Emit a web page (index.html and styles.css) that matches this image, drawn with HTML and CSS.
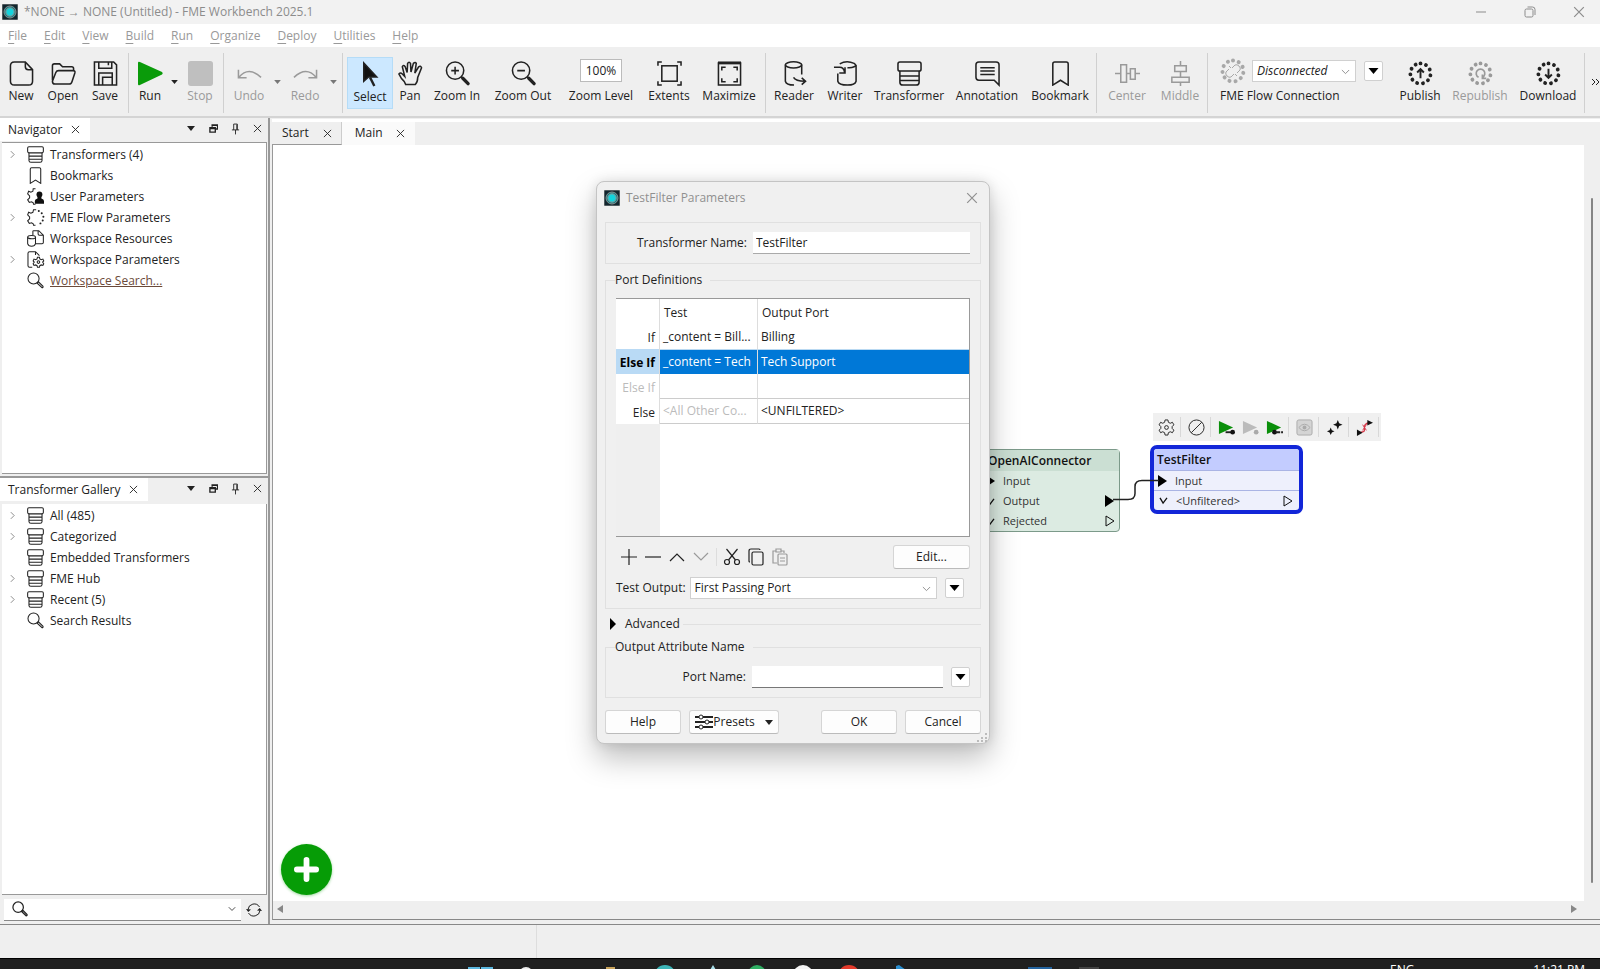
FILE: index.html
```html
<!DOCTYPE html>
<html lang="en">
<head>
<meta charset="utf-8">
<title>*NONE → NONE (Untitled) - FME Workbench 2025.1</title>
<link rel="stylesheet" href="styles.css">
</head>
<body>
<svg class="defs" aria-hidden="true">
  <symbol id="logo" viewBox="0 0 16 16"><rect width="16" height="16" rx="1" fill="#12262e"/><circle cx="8" cy="8" r="6" fill="#0b7f86"/><circle cx="8" cy="8" r="4.2" fill="#14d3dc"/></symbol>
  <symbol id="x" viewBox="0 0 10 10"><path d="M1 1l8 8M9 1l-8 8"/></symbol>
  <symbol id="down" viewBox="0 0 10 6"><path d="M0 0h10L5 6z" fill="currentColor" stroke="none"/></symbol>
  <symbol id="chev" viewBox="0 0 10 6"><path d="M1 .8l4 4 4-4"/></symbol>
  <symbol id="right" viewBox="0 0 6 10"><path d="M1 1l4 4-4 4"/></symbol>
  <symbol id="float" viewBox="0 0 10 10"><path d="M3.5 3V1h6v4.500h-2M1 4h6v5H1zM1 5h6M3.500 1.500h6" stroke-width="1.500"/></symbol>
  <symbol id="pin" viewBox="0 0 10 14"><path d="M3 8V1.500h4V8M1 8h8M5 8v5M6.500 2v6"/></symbol>
  <symbol id="transformer" viewBox="0 0 26 26"><rect x="1" y="1" width="24" height="9.500" rx="2"/><path d="M3 10.500v11.500q0 3 3 3h14q3 0 3-3V10.500M3 15.500h20M3 20.200h20"/></symbol>
  <symbol id="bookmark" viewBox="0 0 26 26"><path d="M5 3q0-2 2-2h12q2 0 2 2v22l-8-5-8 5z"/></symbol>
  <symbol id="search" viewBox="0 0 26 26"><circle cx="10" cy="10" r="8.500"/><path d="M15.500 17l2-2 7 7q.5 2-1.500 2z"/></symbol>
  <symbol id="ring" viewBox="0 0 26 26"><path d="M13 2.500a10.500 10.500 0 1 1-.1 0" stroke-width="4" stroke-linecap="round" stroke-dasharray="0.01 5.9873"/></symbol>
</svg>

<header class="titlebar">
  <svg class="i16"><use href="#logo"/></svg>
  <h1 class="title">*NONE → NONE (Untitled) - FME Workbench 2025.1</h1>
  <div class="winbtns">
    <button aria-label="Minimize"><svg class="i12" viewBox="0 0 12 12"><path d="M1 6h10"/></svg></button>
    <button aria-label="Restore"><svg class="i12" viewBox="0 0 12 12"><rect x="1" y="3" width="8" height="8" rx="1.500"/><path d="M3.500 1h5Q11 1 11 3.500V9"/></svg></button>
    <button aria-label="Close"><svg class="i12"><use href="#x"/></svg></button>
  </div>
</header>
<nav class="menubar">
  <button><u>F</u>ile</button><button><u>E</u>dit</button><button><u>V</u>iew</button><button><u>B</u>uild</button><button><u>R</u>un</button><button><u>O</u>rganize</button><button><u>D</u>eploy</button><button><u>U</u>tilities</button><button><u>H</u>elp</button>
</nav>

<div class="toolbar" role="toolbar">
  <button class="tool w42"><svg viewBox="0 0 26 26"><path d="M1.500 5q0-4 4-4H17l7.500 8v12q0 4-4 4h-15q-4 0-4-4zM17 1v5q0 3 3 3h4.500"/></svg>New</button>
  <button class="tool w42"><svg viewBox="0 0 26 26"><path d="M1.500 20V5q0-2 2-2H9l3 3h9.500q2 0 2 2v2M1.500 21l3.500-9q.8-2 3-2h15q2.500 0 1.800 2.500l-3 9q-.8 2.500-3 2.500H4q-2.500 0-2.500-3z"/></svg>Open</button>
  <button class="tool w42"><svg viewBox="0 0 26 26"><path d="M1.500 1h20l3 3v21h-23zM6 1v6.500h13.500V1M16 1v3.500M6 25V12.500h14V25M10 25v-8h10"/></svg>Save</button>
  <i class="sep"></i>
  <button class="tool w38"><svg viewBox="0 0 26 26"><path d="M0 2q0-2 2-1l23 10.500q1.500 1.500 0 2.500L2 25q-2 1-2-1z" fill="#0a9b0a" stroke="none"/></svg>Run</button>
  <button class="more" aria-label="Run options"><svg><use href="#down"/></svg></button>
  <button class="tool w42 off"><svg viewBox="0 0 26 26"><rect width="26" height="26" rx="3" fill="#bfbfbf" stroke="none"/></svg>Stop</button>
  <i class="sep"></i>
  <button class="tool w46 off"><svg viewBox="0 0 26 26"><path d="M2 17Q12 5 25 17M1.500 9v8.500H10"/></svg>Undo</button>
  <button class="more off" aria-label="Undo list"><svg><use href="#down"/></svg></button>
  <button class="tool w46 off"><svg viewBox="0 0 26 26"><path d="M24 17Q14 5 1 17M24.500 9v8.500H16"/></svg>Redo</button>
  <button class="more off" aria-label="Redo list"><svg><use href="#down"/></svg></button>
  <i class="sep wide"></i>
  <button class="tool w46 on"><svg viewBox="0 0 26 26"><path d="M6 1v19l5-4.500 8.500 0z" fill="#111"/><path d="M12.500 16l4.500 9" stroke-width="2.500"/></svg>Select</button>
  <button class="tool w34"><svg viewBox="0 0 26 26"><path d="M8 24.500Q7 21 3.500 18L1 13.500q1.500-2 3.500 0L7 16 4.500 6q1-2.500 3 0L9.500 12 10 2.500q1.500-2.500 3 0l.5 9L16 2.500q2-2 3 0l-1.500 10L21.500 6q2-1.500 3 1L20.500 17q0 5-2.500 7.500z"/></svg>Pan</button>
  <button class="tool w60"><svg viewBox="0 0 26 26"><circle cx="10.500" cy="10" r="9"/><path d="M10.500 6v8M6.500 10h8M17 16.500l7 7" /><path d="M18.500 18l5.500 5.500" stroke-width="3.500" stroke-linecap="round"/></svg>Zoom In</button>
  <button class="tool w72"><svg viewBox="0 0 26 26"><circle cx="10.500" cy="10" r="9"/><path d="M6.500 10h8M17 16.500l7 7"/><path d="M18.500 18l5.500 5.500" stroke-width="3.500" stroke-linecap="round"/></svg>Zoom Out</button>
  <div class="tool w84 field"><input id="zoom" class="zoom" value="100%"><label for="zoom">Zoom Level</label></div>
  <button class="tool w52"><svg viewBox="0 0 26 26"><rect x="5" y="5" width="16" height="16"/><path d="M1 5V1h4M21 1h4v4M25 21v4h-4M5 25H1v-4"/></svg>Extents</button>
  <button class="tool w68"><svg viewBox="0 0 26 26"><path d="M1.500 2h23v23h-23z"/><path d="M1 2h24" stroke-width="3"/><path d="M5 10V6.500h4M17 6.500h4V10M21 18v3.500h-4M9 21.500H5V18"/></svg>Maximize</button>
  <i class="sep"></i>
  <button class="tool w52"><svg viewBox="0 0 26 26"><ellipse cx="12" cy="4" rx="8.500" ry="3.200"/><path d="M3.500 4v17q1 4 9 4M20.500 4v10M12 17q2 4 12 4M20.500 17.500l4 3.500-4 3.500"/></svg>Reader</button>
  <button class="tool w50"><svg viewBox="0 0 26 26"><path d="M7 3Q14-1 22 2.500q3 2 0 3.500-3 1.500-7 1M5 13v8q1 4 10 4 8 0 9-4V4M1 6.500h6q4 0 5 5M12.500 6.500v6h-6"/></svg>Writer</button>
  <button class="tool w78"><svg><use href="#transformer"/></svg>Transformer</button>
  <button class="tool w78"><svg viewBox="0 0 26 26"><path d="M4 1h18q3 0 3 3v21l-5-5H4q-3 0-3-3V4q0-3 3-3zM5.500 7h15M5.500 10.500h15M5.500 14h15"/></svg>Annotation</button>
  <button class="tool w68"><svg><use href="#bookmark"/></svg>Bookmark</button>
  <i class="sep"></i>
  <button class="tool w56 off"><svg viewBox="0 0 26 26"><path d="M0 13h6M12 13h4M21 13h5M6 4h6v18H6zM16 8h5v11h-5z"/></svg>Center</button>
  <button class="tool w50 off"><svg viewBox="0 0 26 26"><path d="M13 0v5M13 11v6M13 22v4M7 5h12v6H7zM4 17h18v5H4z"/></svg>Middle</button>
  <i class="sep"></i>
  <div class="flow">
    <div class="flowrow">
      <svg class="i26 grey" viewBox="0 0 26 26"><use href="#ring"/><path d="M12 10l3-3q2-1 4 1t1 4l-3 3M14 16l-3 3q-2 1-4-1t-1-4l3-3M9 8l2 2M17 18l-2-2"/></svg>
      <span class="combo italic"><select id="flow"><option>Disconnected</option></select><svg><use href="#chev"/></svg></span>
      <button class="drop" aria-label="Connection options"><svg><use href="#down"/></svg></button>
    </div>
    <label for="flow">FME Flow Connection</label>
  </div>
  <button class="tool w52"><svg viewBox="0 0 26 26"><use href="#ring"/><path d="M13 18V8.500M9.500 12L13 8.500l3.500 3.500" stroke-width="2"/></svg>Publish</button>
  <button class="tool w68 off"><svg viewBox="0 0 26 26"><use href="#ring"/><path d="M11 17a4.500 4.500 0 1 1 4 0M19 18h-4v-4" stroke-width="1.800"/></svg>Republish</button>
  <button class="tool w68"><svg viewBox="0 0 26 26"><use href="#ring"/><path d="M13 8v9.500M9.500 14l3.500 3.500 3.500-3.500" stroke-width="2"/></svg>Download</button>
  <i class="sep"></i>
  <button class="ext" aria-label="More tools"><svg viewBox="0 0 10 10"><path d="M2 2l3 3-3 3M6 2l3 3-3 3"/></svg></button>
</div>

<div class="work">
  <aside class="docks">
    <section class="dock nav">
      <div class="dockhead"><h2 class="docktab">Navigator <button aria-label="Close tab"><svg class="i9"><use href="#x"/></svg></button></h2>
        <div class="dockbtns"><button aria-label="Menu"><svg class="dn"><use href="#down"/></svg></button><button aria-label="Float"><svg class="i9"><use href="#float"/></svg></button><button aria-label="Pin"><svg class="pin"><use href="#pin"/></svg></button><button aria-label="Close"><svg class="i9"><use href="#x"/></svg></button></div></div>
      <ul class="tree">
        <li><svg class="ar"><use href="#right"/></svg><svg class="ic"><use href="#transformer"/></svg>Transformers (4)</li>
        <li><svg class="ic"><use href="#bookmark"/></svg>Bookmarks</li>
        <li><svg class="ic" viewBox="0 0 26 26"><path d="M13 1H9.500L9 5 6 6.500 2.500 5 1 9l3 3v3l-3 3 2.500 4L7 21l2.500 1.500L10 25h3"/><path d="M12 24v-4q0-3 4-4v-3h6v3q4 1 4 4v4z" fill="#111" stroke="none"/><circle cx="19" cy="10" r="4.500" fill="#111" stroke="none"/></svg>User Parameters</li>
        <li><svg class="ar"><use href="#right"/></svg><svg class="ic" viewBox="0 0 26 26"><path d="M14 1H10L9 5 6 6.500 2.500 5 1 9l3 3v3l-3 3 2.500 4L7 21l2.500 1.500L10 25h3"/><path d="M18 3h.1M22.500 6.500h.1M25 12h.1M24 17.500h.1M20.500 22h.1" stroke-width="3" stroke-linecap="round"/></svg>FME Flow Parameters</li>
        <li><svg class="ic" viewBox="0 0 26 26"><ellipse cx="7" cy="11" rx="6" ry="2.500"/><path d="M1 11v10q1 4 6 4t6-4V11M9 8V2q0-1 1-1h8l7 7v11q0 2-2 2H13M17 1v5q0 2 2 2h6"/></svg>Workspace Resources</li>
        <li><svg class="ar"><use href="#right"/></svg><svg class="ic" viewBox="0 0 26 26"><path d="M8 25H4q-2.500 0-2.500-2.500v-19Q1.500 1 4 1h9l6 6M13 1v5"/><circle cx="17.500" cy="17" r="2"/><path d="M16 9.500h3l.6 2.500 2.200 1.200 2.500-.8 1.300 2.600-1.700 2 1.700 2.500-1.300 2.600-2.500-.8-2.200 1.200L19 25h-3l-.6-2.500-2.200-1.200-2.500.8-1.300-2.600 1.700-2.500-1.700-2 1.300-2.600 2.500.8 2.200-1.200z"/></svg>Workspace Parameters</li>
        <li><svg class="ic"><use href="#search"/></svg><a href="#search-box">Workspace Search...</a></li>
      </ul>
    </section>
    <section class="dock gallery">
      <div class="dockhead"><h2 class="docktab">Transformer Gallery <button aria-label="Close tab"><svg class="i9"><use href="#x"/></svg></button></h2>
        <div class="dockbtns"><button aria-label="Menu"><svg class="dn"><use href="#down"/></svg></button><button aria-label="Float"><svg class="i9"><use href="#float"/></svg></button><button aria-label="Pin"><svg class="pin"><use href="#pin"/></svg></button><button aria-label="Close"><svg class="i9"><use href="#x"/></svg></button></div></div>
      <ul class="tree">
        <li><svg class="ar"><use href="#right"/></svg><svg class="ic"><use href="#transformer"/></svg>All (485)</li>
        <li><svg class="ar"><use href="#right"/></svg><svg class="ic"><use href="#transformer"/></svg>Categorized</li>
        <li><svg class="ic"><use href="#transformer"/></svg>Embedded Transformers</li>
        <li><svg class="ar"><use href="#right"/></svg><svg class="ic"><use href="#transformer"/></svg>FME Hub</li>
        <li><svg class="ar"><use href="#right"/></svg><svg class="ic"><use href="#transformer"/></svg>Recent (5)</li>
        <li><svg class="ic"><use href="#search"/></svg>Search Results</li>
      </ul>
      <div class="searchrow">
        <div class="searchbox"><svg class="i16 bold"><use href="#search"/></svg><input id="search-box" aria-label="Search transformers"><svg class="cv"><use href="#chev"/></svg></div>
        <button aria-label="Refresh"><svg class="i16" viewBox="0 0 16 16"><path d="M2 7.500A6.200 6.200 0 0 1 13.500 5M14 8.500A6.200 6.200 0 0 1 2.500 11"/><path d="M0 7l2.200 3L5 7.500zM16 9l-2.200-3L11 8.500z" fill="#222" stroke="none"/></svg></button>
      </div>
    </section>
  </aside>

  <main class="main">
    <div class="tabs"><div class="tab">Start <button aria-label="Close Start"><svg class="i9"><use href="#x"/></svg></button></div><div class="tab active">Main <button aria-label="Close Main"><svg class="i9"><use href="#x"/></svg></button></div></div>
    <div class="view">
      <div class="canvas">
        <div class="node green">
          <h3>OpenAIConnector</h3>
          <p><svg class="tri"><path d="M0 0l9 6-9 6z"/></svg>Input</p>
          <p><svg class="vee" viewBox="0 0 10 8"><path d="M1 1l3.500 6L9 1"/></svg>Output<svg class="tri out"><path d="M0 0l9 6-9 6z"/></svg></p>
          <p><svg class="vee" viewBox="0 0 10 8"><path d="M1 1l3.500 6L9 1"/></svg>Rejected<svg class="tri out open"><path d="M1 1l8 5-8 5z"/></svg></p>
        </div>
        <div class="node blue">
          <h3>TestFilter</h3>
          <p><svg class="tri"><path d="M0 0l9 6-9 6z"/></svg>Input</p>
          <p><svg class="vee" viewBox="0 0 10 8"><path d="M1 1l3.500 6L9 1"/></svg>&lt;Unfiltered&gt;<svg class="tri out open"><path d="M1 1l8 5-8 5z"/></svg></p>
        </div>
        <svg class="wire" viewBox="0 0 46 22"><path d="M0 20.500h15q7 0 7-6v-7q0-6 7-6h17"/></svg>
        <div class="minibar">
          <button aria-label="Parameters"><svg viewBox="0 0 18 18"><circle cx="9" cy="9" r="2"/><path d="M7.500 1h3l.5 2.500 2 1 2.300-1 1.500 2.700L15 8v2l1.800 1.800-1.500 2.700-2.300-1-2 1-.5 2.500h-3L7 14.500l-2-1-2.300 1-1.500-2.700L3 10V8L1.200 6.200l1.500-2.700 2.300 1 2-1z"/></svg></button><i></i>
          <button aria-label="Disable"><svg viewBox="0 0 18 18"><circle cx="9" cy="9" r="8"/><path d="M14.500 3.500l-11 11"/></svg></button><i></i>
          <button aria-label="Run to this"><svg viewBox="0 0 18 18"><path d="M1 2l15 7-15 7z" fill="#0a8f0a" stroke="none"/><path d="M8 14h6" stroke-width="2"/><circle cx="15.500" cy="14" r="2.500" fill="#111" stroke="none"/></svg></button>
          <button aria-label="Run selected"><svg viewBox="0 0 18 18"><path d="M1 2l15 7-15 7z" fill="#bbb" stroke="none"/><circle cx="15" cy="14" r="2.500" fill="#aaa" stroke="none"/></svg></button>
          <button aria-label="Run from this"><svg viewBox="0 0 18 18"><path d="M1 2l15 7-15 7z" fill="#0a8f0a" stroke="none"/><circle cx="9" cy="14" r="2.500" fill="#111" stroke="none"/><path d="M10 14h8" stroke-width="2" stroke-dasharray="5 1"/></svg></button><i></i>
          <button aria-label="Inspect"><svg viewBox="0 0 18 18"><rect x="1" y="1" width="16" height="16" rx="2" fill="#d4d4d4" stroke="#aaa"/><path d="M3 9q6-7 12 0-6 7-12 0z" stroke="#aaa"/><circle cx="9" cy="9" r="2" fill="#aaa" stroke="none"/></svg></button><i></i>
          <button aria-label="Assist"><svg viewBox="0 0 18 18"><path d="M12.500 1l1.400 3.600L17.500 6l-3.600 1.400-1.400 3.600-1.400-3.600L7.500 6l3.600-1.400zM5 9l1.200 2.800L9 13l-2.800 1.200L5 17l-1.200-2.800L1 13l2.800-1.200z" fill="#111" stroke="none"/></svg></button><i></i>
          <button aria-label="Connections"><svg viewBox="0 0 18 18"><path d="M5 14q5 0 4-4-1-5 5-6" stroke="#d63a4a" stroke-width="1.500"/><path d="M7 6l4 6M11 6l-4 6" stroke="#d63a4a"/><path d="M12 1l6 3-6 3zM1 11l6 3.500L1 18z" fill="#111" stroke="none"/></svg></button><i></i>
        </div>
        <button class="add" aria-label="Add"><svg viewBox="0 0 26 26"><path d="M13 3v20M3 13h20" stroke="#fff" stroke-width="6" stroke-linecap="round"/></svg></button>
      </div>
      <div class="vscroll"></div>
      <div class="hscroll"><svg viewBox="0 0 6 8"><path d="M6 0v8L0 4z"/></svg><svg viewBox="0 0 6 8"><path d="M0 0v8l6-4z"/></svg></div>
    </div>
  </main>
</div>

<footer class="status"></footer>
<div class="taskbar">
  <svg class="apps" viewBox="0 0 700 11"><path d="M0 8h12v3H0zM13 8h12v3H13z" fill="#5cb8e0"/><circle cx="58" cy="15" r="7" fill="#eee"/><path d="M138 8h9v3h-9z" fill="#c9a35a"/><circle cx="197" cy="17" r="11" fill="#3db5b8"/><path d="M242 11l3-5 3 5z" fill="#a8dde8"/><circle cx="289" cy="15" r="9" fill="#2fae63"/><circle cx="335" cy="16" r="10" fill="#f4f4f4"/><circle cx="381" cy="17" r="11" fill="#e33b2c"/><path d="M428 11v-4l3-1 7 5z" fill="#2b8fd0"/><path d="M560 8h24v3h-24z" fill="#2464a0"/><path d="M611 8h20v3h-20z" fill="#444"/></svg>
  <span class="lang">ENG</span><span class="clock">11:21 PM</span>
</div>

<form class="dialog" role="dialog" aria-label="TestFilter Parameters">
  <div class="dhead"><svg class="i16"><use href="#logo"/></svg><h2>TestFilter Parameters</h2><button type="button" aria-label="Close dialog"><svg class="i12"><use href="#x"/></svg></button></div>
  <div class="box name"><label for="tname">Transformer Name:</label><input id="tname" value="TestFilter"></div>
  <fieldset class="box ports"><legend>Port Definitions</legend>
    <div class="tablewrap"><table>
      <colgroup><col class="c1"><col class="c2"><col></colgroup>
      <thead><tr><th></th><th>Test</th><th>Output Port</th></tr></thead>
      <tbody>
        <tr><th>If</th><td>_content = Bill...</td><td>Billing</td></tr>
        <tr class="sel"><th>Else If</th><td>_content = Tech</td><td>Tech Support</td></tr>
        <tr class="blank"><th>Else If</th><td></td><td></td></tr>
        <tr class="else"><th>Else</th><td class="dim">&lt;All Other Co...</td><td>&lt;UNFILTERED&gt;</td></tr>
      </tbody></table></div>
    <div class="edits">
      <button type="button" aria-label="Add row"><svg viewBox="0 0 16 16"><path d="M8 0v16M0 8h16"/></svg></button>
      <button type="button" aria-label="Remove row"><svg viewBox="0 0 16 16"><path d="M0 8h16"/></svg></button>
      <button type="button" aria-label="Move up"><svg viewBox="0 0 16 16"><path d="M1 12l7-7 7 7"/></svg></button>
      <button type="button" class="off" aria-label="Move down"><svg viewBox="0 0 16 16"><path d="M1 4l7 7 7-7"/></svg></button>
      <i></i>
      <button type="button" aria-label="Cut"><svg viewBox="0 0 16 16"><circle cx="3" cy="13" r="2.500"/><circle cx="13" cy="13" r="2.500"/><path d="M2.500 0l9 11M13.500 0l-9 11"/></svg></button>
      <button type="button" aria-label="Copy"><svg viewBox="0 0 16 16"><rect x="4" y="3" width="11" height="13" rx="1.500"/><path d="M2 13Q1 13 1 12V2Q1 0 3 0h8q1 0 1 1"/></svg></button>
      <button type="button" class="off" aria-label="Paste"><svg viewBox="0 0 16 16"><rect x="6" y="5" width="9" height="11" rx="1"/><path d="M5 14H1V2h3M9 2h3v2M4 0h5v3H4zM8 9h5M8 12h5"/></svg></button>
      <button type="button" class="btn edit">Edit...</button>
    </div>
    <div class="output"><label for="tout">Test Output:</label><span class="combo"><select id="tout"><option>First Passing Port</option></select><svg><use href="#chev"/></svg></span><button type="button" class="drop" aria-label="Test output options"><svg><use href="#down"/></svg></button></div>
  </fieldset>
  <div class="advanced"><svg viewBox="0 0 6 12"><path d="M0 0l6 6-6 6z" fill="#000"/></svg><span>Advanced</span></div>
  <fieldset class="box attr"><legend>Output Attribute Name</legend><label for="pname">Port Name:</label><input id="pname"><button type="button" class="drop" aria-label="Port name options"><svg><use href="#down"/></svg></button></fieldset>
  <div class="actions">
    <button type="button" class="btn w76">Help</button>
    <button type="button" class="btn w90"><svg class="presets" viewBox="0 0 18 16"><path d="M0 3h4M8 3h10M0 8h10M14 8h4M0 13h4M8 13h10" stroke-width="2"/><circle cx="6" cy="3" r="2"/><circle cx="12" cy="8" r="2"/><circle cx="6" cy="13" r="2"/></svg>Presets<svg class="dn"><use href="#down"/></svg></button>
    <span class="grow"></span>
    <button type="button" class="btn w76">OK</button>
    <button type="button" class="btn w76">Cancel</button>
  </div>
  <svg class="grip" viewBox="0 0 10 10"><path d="M8 1h2v2H8zM4 5h2v2H4zM8 5h2v2H8zM0 8h2v2H0zM4 8h2v2H4zM8 8h2v2H8z"/></svg>
</form>
</body>
</html>
```
FILE: styles.css
```css
* { box-sizing: border-box; }
body { margin: 0; height: 100vh; display: flex; flex-direction: column; overflow: hidden; position: relative; background: #efefef; color: #222; font: 12px/16px "Open Sans", "Noto Sans", sans-serif; }
h1, h2, h3, p, ul, fieldset { margin: 0; padding: 0; font: inherit; border: 0; list-style: none; }
button, input, select { font: inherit; color: inherit; background: none; border: 0; padding: 0; margin: 0; min-width: 0; }
svg { display: block; fill: none; stroke: currentColor; flex: none; overflow: visible; }
.defs { position: absolute; width: 0; height: 0; }
.i9 { width: 9px; height: 9px; }
.i12 { width: 12px; height: 12px; }
.i16 { width: 16px; height: 16px; }
.i26 { width: 26px; height: 26px; }
.bold { stroke-width: 2px; }
.dn { width: 8px; height: 5px; }
.pin { width: 9px; height: 14px; }
.grey { color: #a8a8a8; }

.titlebar { flex: 0 0 24px; display: flex; align-items: center; padding-left: 2px; gap: 6px; background: #f2f2f2; color: #8c8c8c; }
.title { flex: 1; }
.winbtns { display: flex; margin-right: -3px; }
.winbtns button { width: 49px; display: grid; place-items: center; }
.menubar { flex: 0 0 23px; display: flex; align-items: center; gap: 17px; padding-left: 8px; background: #fff; color: #999; }
.menubar u { text-underline-offset: 3px; }

.toolbar { flex: 0 0 71px; display: flex; align-items: flex-start; padding-top: 10px; border-bottom: 2px solid #d4d4d4; background: #efefef; }
.tool { flex: none; height: 52px; display: flex; flex-direction: column; align-items: center; padding-top: 4px; gap: 2px; white-space: nowrap; color: #222; border: 0; }
.tool svg { width: 25px; height: 25px; stroke-width: 1.6px; }
.tool.on { padding-top: 5px; background: #cce8ff; box-shadow: inset 0 0 0 1px #b5dcf7; }
.off { color: #9a9a9a; }
.tool.field { padding-top: 2px; gap: 6px; }
.zoom { width: 42px; height: 23px; border: 1px solid #bbb; background: #fff; text-align: center; }
.more { flex: 0 0 10px; padding-top: 23px; display: flex; justify-content: center; color: #222; }
.more.off { color: #777; }
.more svg { width: 7px; height: 4px; }
.sep { flex: none; width: 1px; height: 60px; margin: -4px 2px 0 2px; background: #d0d0d0; }
.sep.wide { margin: -4px 4px 0 4px; }
.w34 { width: 34px; } .w38 { width: 38px; } .w42 { width: 42px; } .w46 { width: 46px; } .w50 { width: 50px; } .w52 { width: 52px; } .w56 { width: 56px; } .w60 { width: 60px; } .w68 { width: 68px; } .w72 { width: 72px; } .w78 { width: 78px; } .w84 { width: 84px; } .w76 { width: 76px; } .w90 { width: 90px; }
.flow { flex: none; width: 184px; padding-left: 10px; display: flex; flex-direction: column; gap: 3px; }
.flowrow { display: flex; align-items: center; gap: 6px; height: 28px; }
.flowrow .drop { margin-left: 2px; }
.combo { position: relative; display: block; flex: 0 0 104px; height: 22px; background: #fff; border: 1px solid #d0d0d0; }
.combo select { appearance: none; width: 100%; height: 100%; padding: 0 20px 0 4px; line-height: 20px; }
.combo svg { position: absolute; right: 5px; top: 8px; width: 9px; height: 6px; color: #888; pointer-events: none; }
.italic { font-style: italic; }
.drop { flex: 0 0 19px; height: 20px; display: grid; place-items: center; background: #fff; border: 1px solid #d0d0d0; border-radius: 2px; color: #000; }
.drop svg { width: 11px; height: 6px; }
.ext { padding: 20px 0 0 2px; }
.ext svg { width: 12px; height: 10px; }

.work { flex: 1; min-height: 0; display: flex; }
.docks { flex: 0 0 270px; display: flex; flex-direction: column; border-right: 2px solid #999; }
.dock { display: flex; flex-direction: column; min-height: 0; }
.nav { flex: 0 0 360px; border-bottom: 2px solid #999; }
.gallery { flex: 1; }
.dockhead { flex: 0 0 24px; display: flex; justify-content: space-between; }
.gallery .dockhead { flex-basis: 26px; }
.docktab { display: flex; align-items: center; gap: 9px; height: 23px; padding: 0 10px 0 8px; background: #fff; }
.dockbtns { display: flex; align-items: center; height: 21px; padding-right: 6px; gap: 12px; }
.dockbtns button { display: grid; place-items: center; width: 10px; height: 16px; color: #222; }
.tree { flex: 1; min-height: 0; margin: 0 1px 2px 2px; padding-top: 1px; background: #fff; border: 1px solid #999; border-left: 0; }
.gallery .tree { border-top: 0; margin-bottom: 0; }
.tree li { display: flex; align-items: center; height: 21px; gap: 6px; padding-left: 25px; }
.tree .ar { width: 5px; height: 9px; margin: 0 6px 0 -17px; color: #777; }
.tree .ic { width: 17px; height: 17px; stroke-width: 1.6px; }
.tree a { color: #6b4a3a; }
.searchrow { flex: 0 0 29px; display: flex; align-items: center; gap: 5px; padding: 0 6px 0 4px; }
.searchbox { flex: 1; display: flex; align-items: center; height: 22px; padding: 0 5px 0 8px; background: #fff; border-bottom: 1px solid #888; }
.searchbox input { flex: 1; }
.cv { width: 8px; height: 6px; }

.main { flex: 1; min-width: 0; display: flex; flex-direction: column; padding: 0 0 4px 2px; }
.tabs { flex: 0 0 26px; display: flex; margin-top: 1px; border-top: 3px solid #fff; }
.tab { display: flex; align-items: center; gap: 14px; padding: 0 9px 0 10px; border-right: 1px solid #ccc; border-bottom: 1px solid #999; }
.tab.active { background: #fafafa; border-right: 0; border-bottom-color: #fafafa; gap: 13px; padding: 0 10px 0 13px; }
.view { flex: 1; min-height: 0; display: grid; grid-template: 1fr 18px / 1fr 16px; border-left: 1px solid #999; border-bottom: 1px solid #888; }
.canvas { position: relative; background: #fff; overflow: hidden; }
.vscroll { padding: 53px 7px 0 7px; }
.vscroll::before { content: ""; display: block; height: calc(100% - 18px); background: #858585; border-radius: 1px; }
.hscroll { display: flex; justify-content: space-between; align-items: center; padding: 0 7px 3px 4px; }
.hscroll svg { width: 6px; height: 8px; fill: #888; stroke: none; }

.node { position: absolute; color: #333; }
.node h3 { font-weight: 600; font-size: 12px; line-height: 22px; padding-left: 3px; color: #111; }
.node p { display: flex; align-items: center; height: 20px; padding-left: 4px; font-size: 11px; }
.node .tri { width: 10px; height: 12px; margin-right: 7px; fill: #000; stroke: none; }
.node .vee { width: 9px; height: 7px; margin: 0 8px 0 0; color: #111; stroke-width: 1.5px; }
.node .tri.out { margin: 0 0 0 auto; }
.node .tri.open { fill: none; stroke: #111; }
.green { left: 708px; top: 304px; width: 139px; border: 1px solid #7c9a8a; border-radius: 4px; background: #dcebe2; padding-right: 4px; }
.green h3 { background: #cbdfd3; margin-right: -4px; padding-left: 6px; }
.blue { left: 877px; top: 300px; width: 153px; border: 4px solid #1226d8; border-radius: 7px; background: #eef0fc; }
.node h3 { line-height: 21px; }
.blue h3 { background: #c3ccff; border-radius: 3px 3px 0 0; }
.blue p { border-top: 1px solid #aab4e4; padding-right: 6px; }
.blue .vee { margin-left: 1px; }
.wire { position: absolute; left: 840px; top: 334px; width: 46px; height: 22px; stroke: #222; stroke-width: 1.500px; }
.minibar { position: absolute; left: 880px; top: 268px; height: 28px; display: flex; align-items: center; gap: 2px; padding-left: 2px; background: #f0f0f0; }
.minibar button { width: 22px; display: grid; place-items: center; color: #222; }
.minibar svg { width: 17px; height: 17px; }
.minibar i { width: 1px; height: 20px; margin: 0 2px 0 1px; background: #d8d8d8; }
.add { position: absolute; left: 8px; bottom: 6px; width: 51px; height: 51px; border-radius: 50%; background: #069c06; display: grid; place-items: center; box-shadow: 0 1px 3px #9fd89f; }
.add svg { width: 25px; height: 25px; }

.status { flex: 0 0 34px; border-top: 1px solid #888; }
.status::before { content: ""; display: block; width: 536px; height: 100%; border-right: 1px solid #ddd; }
.taskbar { flex: 0 0 11px; display: flex; align-items: flex-start; overflow: hidden; background: #202020; border-top: 1px solid #000; color: #fff; }
.apps { width: 700px; height: 11px; margin-left: 468px; overflow: hidden; stroke: none; }
.lang { margin: 3px auto 0 222px; }
.clock { margin: 3px 15px 0 0; }

.dialog { position: absolute; left: 596px; top: 181px; width: 394px; padding: 0 8px 9px 8px; background: #f0f0f0; border: 1px solid #c4c4c4; border-radius: 8px; box-shadow: 0 14px 30px rgba(0,0,0,.26), 0 0 12px rgba(0,0,0,.1); }
.dhead { display: flex; align-items: center; height: 32px; gap: 6px; margin: 0 3px 8px -1px; color: #909090; }
.dhead h2 { flex: 1; }
.box { border: 1px solid #e0e0e0; }
.box input { height: 22px; padding: 0 3px; background: #fff; border-bottom: 1px solid #aaa; }
.name { display: flex; align-items: center; justify-content: flex-end; gap: 6px; height: 42px; padding-right: 10px; }
.name input { width: 217px; }
.ports { margin-top: 7px; padding: 0 10px 9px 10px; }
legend { padding: 0 8px 0 0; margin-left: -1px; line-height: 18px; }
.tablewrap { height: 239px; margin-top: 9px; background: linear-gradient(90deg, #efefef 44px, #fff 44px); border: 1px solid #999; border-left: 0; }
table { width: 100%; table-layout: fixed; border-collapse: separate; border-spacing: 0; white-space: nowrap; }
.c1 { width: 44px; } .c2 { width: 98px; }
th, td { height: 25px; padding: 0 4px 0 3px; text-align: left; font-weight: 400; border-right: 1px solid #ddd; background: #fff; overflow: hidden; }
td:last-child, th:last-child { border-right: 0; }
thead th { padding: 2px 4px 0 4px; }
tbody th { text-align: right; padding: 2px 4px 0 0; }
.sel td { background: #0078d7; color: #fff; border-top: 1px solid #b9d9f2; }
.sel th { background: #b9daf5; font-weight: 700; color: #000; }
.blank th, .dim { color: #bbb; }
.blank td, .else td { border-bottom: 1px solid #ccc; }
.edits { display: flex; align-items: center; gap: 8px; height: 24px; margin-top: 8px; padding-left: 5px; }
.edits svg { width: 16px; height: 16px; stroke-width: 1.2px; }
.edits i { width: 1px; height: 18px; background: #ddd; margin: 0 -1px; }
.btn { height: 24px; background: #fdfdfd; border: 1px solid #d5d5d5; border-bottom-color: #bbb; border-radius: 3px; display: flex; align-items: center; justify-content: center; }
.edit { width: 77px; margin-left: auto; }
.output { display: flex; align-items: center; gap: 4px; margin-top: 8px; padding-right: 6px; }
.output .combo { flex: 1; }
.output .drop { margin-left: 4px; }
.advanced { display: flex; align-items: center; gap: 9px; height: 16px; margin: 7px 0 6px 5px; }
.advanced svg { width: 6px; height: 12px; stroke: none; }
.advanced::after { content: ""; flex: 1; height: 1px; margin-left: -6px; background: #e0e0e0; }
.attr { display: flex; align-items: center; justify-content: flex-end; height: 60px; padding: 0 10px; }
.attr input { width: 191px; margin: 0 8px 0 6px; border-bottom-color: #777; }
.actions { display: flex; gap: 8px; margin-top: 12px; }
.grow { flex: 1; }
.presets { width: 18px; height: 16px; }
.actions .dn { margin-left: 10px; }
.grip { position: absolute; right: 2px; bottom: 1px; width: 10px; height: 10px; fill: #bbb; stroke: none; }
```
